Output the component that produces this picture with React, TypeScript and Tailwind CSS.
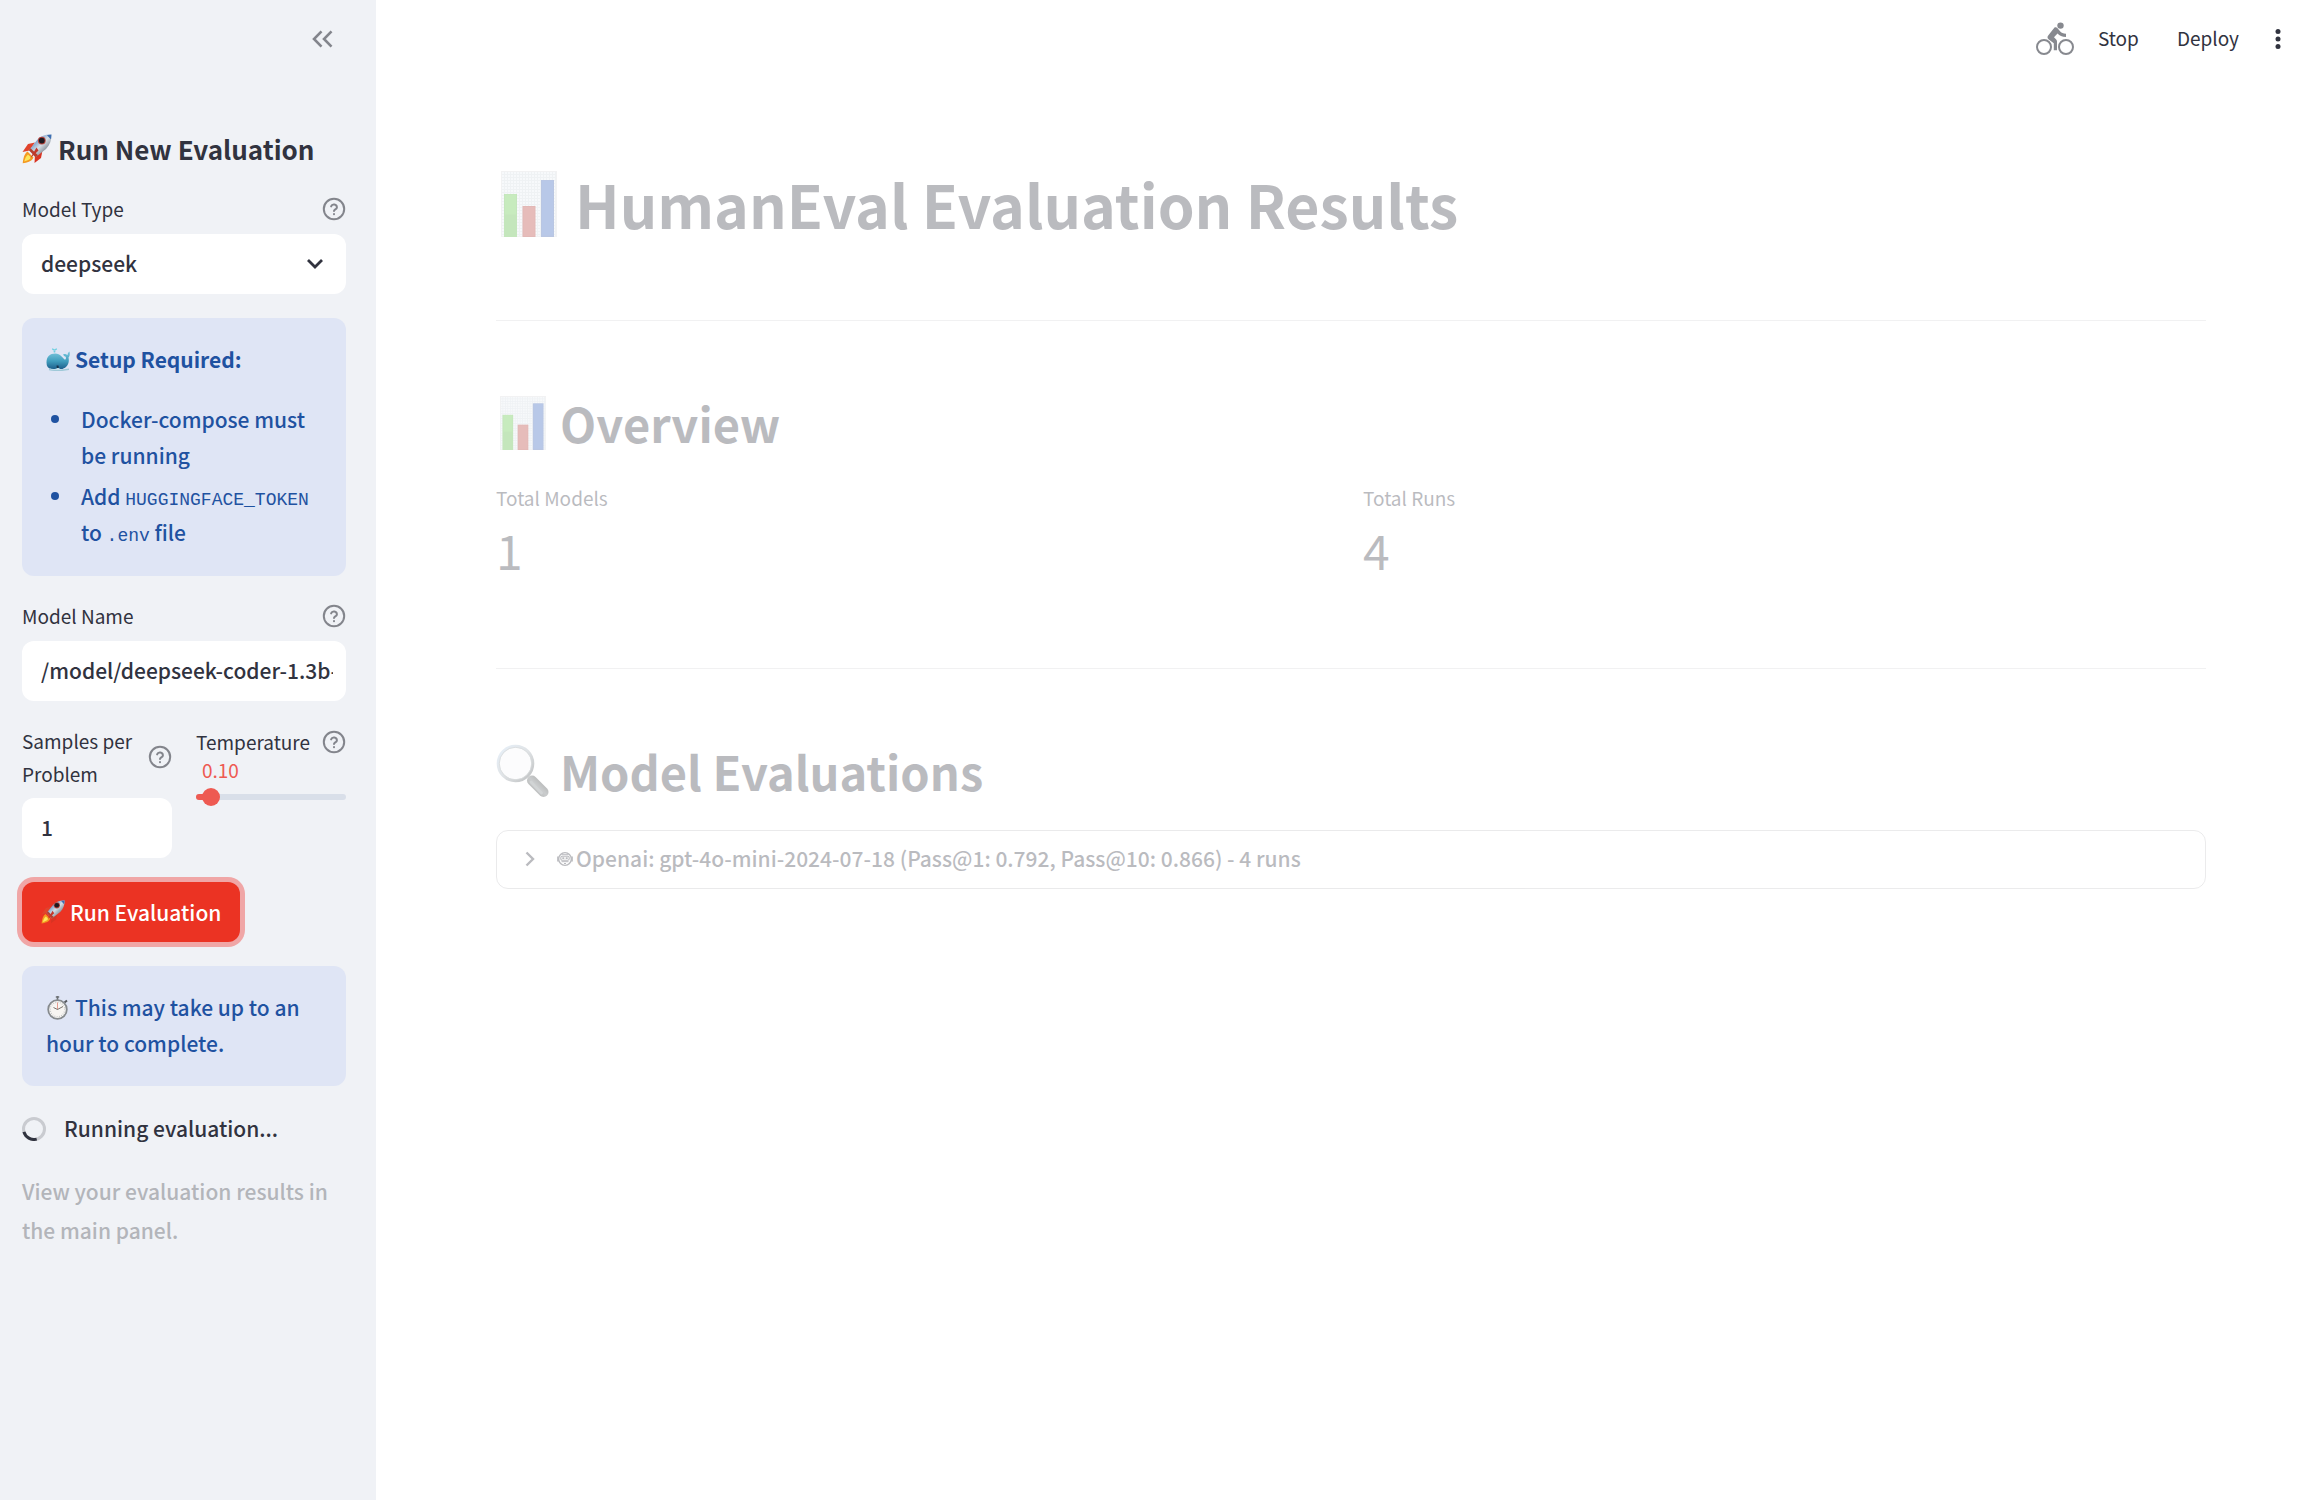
import React, { useId } from "react";

function HelpIcon() {
  return (
    <svg viewBox="0 0 24 24" className="h-6 w-6 shrink-0" fill="none" stroke="#83858c" strokeWidth="2" strokeLinecap="round" strokeLinejoin="round" aria-hidden="true">
      <circle cx="12" cy="12" r="10.2" />
      <path d="M9.1 9.400a3 3 0 0 1 5.800 1c0 1.800-2.900 2.200-2.900 3.600" />
      <path d="M12 17.100v.1" />
    </svg>
  );
}

function Rocket({ className }: { className: string }) {
  const id = useId();
  return (
    <svg viewBox="0 0 30 30" className={className} aria-hidden="true">
      <defs>
        <linearGradient id={id} x1="0" y1="0" x2="1" y2="1">
          <stop offset="0.15" stopColor="#3d78bd" />
          <stop offset="0.5" stopColor="#d5dde4" />
          <stop offset="0.85" stopColor="#5c6570" />
        </linearGradient>
      </defs>
      <path d="M13 8.500 6 10 .5 18l7-1.500z" fill="#e0432c" />
      <path d="M20.500 16.500 19 24l-6.500 5 .5-8z" fill="#d83423" />
      <path d="M5.500 17.500C2 20 1.500 24 .7 29.300 5 28.500 9.500 28 11.500 23.500z" fill="#f49a22" />
      <path d="M6 20.500c-2.200 1.800-2.900 4-3.800 7 3-.8 5.600-1.700 7-4z" fill="#fde75c" />
      <path d="M29.500.6c-5.600-.3-10.200 1-14 5L7 16.200l6.500 7L24 15c4-4 5.600-8.800 5.500-14.400z" fill={`url(#${id})`} />
      <path d="M7 16.200l1.500-2 7.500 7-2.500 2z" fill="#b5402f" />
      <path d="M29.500.6 25 1c1.200 1.800 2.400 3 4 4.200z" fill="#3d6fb3" />
      <circle cx="19.800" cy="6.600" r="3.900" fill="#b9443c" />
      <circle cx="19.800" cy="6.600" r="2.900" fill="#1d1a20" />
      <path d="M14.500 13.500 8 24.500l8.500-8z" fill="#c2372a" />
    </svg>
  );
}

function Whale() {
  const id = useId();
  return (
    <svg viewBox="0 0 24 24" className="h-6 w-6 shrink-0" aria-hidden="true">
      <defs>
        <linearGradient id={id} x1="0" y1="0" x2="0" y2="1">
          <stop offset="0" stopColor="#7cc8de" />
          <stop offset="0.55" stopColor="#3f9dbd" />
          <stop offset="1" stopColor="#1d5f8c" />
        </linearGradient>
      </defs>
      <path d="M8.500 5.500c0-2-.8-3.300-3-3.800M8.500 5.500c0-2 .8-3.300 3-3.800M8.500 5.500V2" stroke="#6fcfe0" strokeWidth="1.500" fill="none" strokeDasharray="2 .7" />
      <path d="M3 22.500c6 1.200 14 1 20-.2" stroke="#9fc9d8" strokeWidth="1.500" fill="none" />
      <path d="M.5 15.500C.5 9.500 4 6.500 9.200 6.500c5.300 0 7.300 4.500 9.800 6.300 1.300-1.200 1.200-2.600.3-3.200-1.400-.8-2.200-1.500-1.900-2.600 1.800-.2 3.200.3 4.100 1.200.2-1.700.6-3 2-3.700.6 2.500.2 4.700-1 6.100 1.300 5.500-1.300 10-6 11.400H5C2.200 21.500.5 19.500.5 15.500z" fill={`url(#${id})`} />
      <path d="M3 21c3 1.500 6.500 1.500 9-.5l3 2H5z" fill="#bfe0ea" />
      <path d="M10.500 18.500h2l.3 2.500h-2z" fill="#163049" />
    </svg>
  );
}

function Stopwatch() {
  return (
    <svg viewBox="0 0 24 24" className="mr-[5px] inline-block h-6 w-6 align-[-4px]" aria-hidden="true">
      <path d="M11.500 0v4M9.800 1h3.400" stroke="#6e7276" strokeWidth="1.600" />
      <path d="m18.500 6.500 2.500-2" stroke="#55595e" strokeWidth="2" />
      <circle cx="11.500" cy="13.500" r="9.300" fill="#f7f5f2" stroke="#868a8d" strokeWidth="1.800" />
      <circle cx="11.500" cy="13.500" r="7.200" fill="none" stroke="#b6b9ba" strokeWidth="1.200" strokeDasharray=".7 1.560" />
      <path d="M11.500 13.500V6.500" stroke="#e59c8f" strokeWidth="1" />
      <path d="m7.500 11.500 4 2 5.500-3" stroke="#77726c" strokeWidth="1" fill="none" />
    </svg>
  );
}

function BarChart({ className }: { className: string }) {
  const id = useId();
  return (
    <svg viewBox="0 0 56 66" className={className} preserveAspectRatio="none" aria-hidden="true">
      <defs>
        <pattern id={id} width="3" height="3" patternUnits="userSpaceOnUse">
          <rect width="3" height="3" fill="#e9eef3" />
          <path d="M0 .5h3M.5 0v3" stroke="#cfd8e0" strokeWidth="1" />
        </pattern>
      </defs>
      <rect width="56" height="66" rx="1" fill={`url(#${id})`} />
      <rect x=".5" y=".5" width="55" height="65" fill="none" stroke="#d9dadc" />
      <rect x="3" y="23" width="13" height="43" fill="#50b536" />
      <rect x="4" y="23.500" width="11" height="20" fill="#59c43d" />
      <rect x="21.500" y="35" width="13" height="31" fill="#aa2c26" />
      <rect x="22.500" y="36" width="11" height="29" fill="#b53630" />
      <rect x="40" y="9" width="13" height="57" fill="#2f56aa" />
      <rect x="41" y="9.500" width="11" height="55" fill="#2c5bbb" />
    </svg>
  );
}

function Magnifier() {
  const id = useId();
  return (
    <svg viewBox="0 0 54 54" className="h-[54px] w-[54px] shrink-0" aria-hidden="true">
      <defs>
        <linearGradient id={id} x1="1" y1="0" x2="0" y2="1">
          <stop offset="0" stopColor="#1d2020" />
          <stop offset="0.5" stopColor="#60676a" />
          <stop offset="1" stopColor="#2a2e2e" />
        </linearGradient>
        <linearGradient id={id + "r"} x1="0" y1="0" x2="1" y2="1">
          <stop offset="0" stopColor="#b8d3ee" />
          <stop offset="0.5" stopColor="#a3adb5" />
          <stop offset="1" stopColor="#3c4144" />
        </linearGradient>
      </defs>
      <circle cx="19.500" cy="19.500" r="17.300" fill="#f7f8f9" stroke={`url(#${id}r)`} strokeWidth="3" />
      <circle cx="19.500" cy="19.500" r="16.200" fill="none" stroke="#8c9498" strokeWidth=".8" />
      <path d="m36 36.500 11.500 11.500" stroke={`url(#${id})`} strokeWidth="10" strokeLinecap="round" />
      <path d="m35 38 10.500 11" stroke="#777e81" strokeWidth="3" strokeLinecap="round" />
    </svg>
  );
}

function RobotFace() {
  return (
    <svg viewBox="0 0 16 16" className="h-4 w-4 shrink-0" fill="none" stroke="#31333f" aria-hidden="true">
      <circle cx="8" cy="8" r="6.300" strokeWidth="1.300" />
      <path d="M1 5.500v5M15 5.500v5" strokeWidth="1.700" />
      <rect x="3.800" y="5.200" width="8.400" height="4" rx="1.500" strokeWidth="1.100" />
      <path d="M5.300 7.200h2M8.700 7.200h2" strokeWidth="1.700" />
      <path d="M4.500 3.700h7M4.500 10.700h7M7 12.500h2" strokeWidth="1" />
    </svg>
  );
}

function Cyclist() {
  return (
    <svg viewBox="0 0 38 34" className="h-[34px] w-[38px] shrink-0" fill="none" stroke="#87898f" aria-hidden="true">
      <circle cx="8" cy="25" r="7" strokeWidth="2" />
      <circle cx="30" cy="25" r="7" strokeWidth="2" />
      <circle cx="24.500" cy="3.600" r="3.200" fill="#87898f" stroke="none" />
      <path d="M18.500 5.500c1-.5 2-.3 2.800.5l3.200 3.800c1 1 2.500 1.800 5.500 1.900v3.200c-4 0-6.500-1.300-8.500-3.400l-3.500 3.700 2.200 2.300c.6.600.8 1.200.8 2v8.800h-3.200v-7l-5-3.800c-1.600-1.200-1.700-2.800-.4-4.200z" fill="#87898f" stroke="none" />
    </svg>
  );
}

const field =
  "h-[60px] w-full rounded-xl bg-white pb-[2px] pl-[19px] pr-[13px] text-[21px] leading-[36px] font-medium text-[#31333f] outline-none";

function FieldLabel({ htmlFor, children, className = "" }: { htmlFor: string; children: React.ReactNode; className?: string }) {
  return (
    <div className={`flex items-center justify-between ${className}`}>
      <label htmlFor={htmlFor} className="whitespace-nowrap text-[19px] leading-[33px]">
        {children}
      </label>
      <button type="button" aria-label="Help" className="-ml-1">
        <HelpIcon />
      </button>
    </div>
  );
}

function Sidebar() {
  return (
    <aside className="w-[376px] shrink-0 bg-[#f0f2f6] pl-[22px] pr-[30px]">
      <div className="flex h-[78px] items-center justify-end">
        <button type="button" aria-label="Collapse sidebar" className="mr-[13px]">
          <svg viewBox="0 0 22 18" className="h-[18px] w-[22px]" fill="none" stroke="#83858c" strokeWidth="2.600" aria-hidden="true">
            <path d="M10.500 1.300 3 9l7.500 7.700M20.500 1.300 13 9l7.500 7.700" />
          </svg>
        </button>
      </div>

      <div className="pt-[47px]">
        <h2 className="mb-5 flex h-12 items-center gap-[6px] whitespace-nowrap text-[26px] font-semibold leading-[48px]">
          <Rocket className="h-[30px] w-[30px] shrink-0" />
          Run New Evaluation
        </h2>

        <div className="flex flex-col gap-6">
          <div>
            <FieldLabel htmlFor="model-type" className="-mt-px mb-[9px]">Model Type</FieldLabel>
            <div className="relative">
              <select id="model-type" defaultValue="deepseek" className={`${field} appearance-none`}>
                <option>deepseek</option>
                <option>openai</option>
              </select>
              <svg viewBox="0 0 18 12" className="pointer-events-none absolute right-[22px] top-[24px] h-3 w-[18px]" fill="none" stroke="#31333f" strokeWidth="2.800" aria-hidden="true">
                <path d="m2 2 7 7 7-7" />
              </svg>
            </div>
          </div>

          <section className="rounded-xl bg-[#dfe5f5] px-6 pt-[23px] pb-[26px] text-[21px] leading-[36px] font-medium text-[#1f52a1]">
            <p className="mb-6 flex items-center gap-[5px] font-semibold">
              <Whale />
              Setup Required:
            </p>
            <ul className="flex flex-col gap-[5px]">
              <li className="flex gap-[22px]">
                <span className="ml-[5px] mt-[14px] h-2 w-2 shrink-0 rounded-full bg-[#1f52a1]" />
                <span className="whitespace-nowrap">
                  Docker-compose must
                  <br />
                  be running
                </span>
              </li>
              <li className="flex gap-[22px]">
                <span className="ml-[5px] mt-[14px] h-2 w-2 shrink-0 rounded-full bg-[#1f52a1]" />
                <span className="whitespace-nowrap">
                  Add <code className="font-['Liberation_Mono',monospace] text-[18px] leading-[20px] font-normal">HUGGINGFACE_TOKEN</code>
                  <br />
                  to <code className="font-['Liberation_Mono',monospace] text-[18px] leading-[20px] font-normal">.env</code> file
                </span>
              </li>
            </ul>
          </section>

          <div>
            <FieldLabel htmlFor="model-name" className="-mt-px mb-[9px]">Model Name</FieldLabel>
            <input id="model-name" type="text" defaultValue="/model/deepseek-coder-1.3b-instruct" className={field} />
          </div>

          <div className="grid grid-cols-2 gap-6">
            <div>
              <FieldLabel htmlFor="samples" className="-mt-px mb-2">
                Samples per
                <br />
                Problem
              </FieldLabel>
              <input id="samples" type="text" inputMode="numeric" defaultValue="1" className={field} />
            </div>
            <div>
              <FieldLabel htmlFor="temperature">Temperature</FieldLabel>
              <output htmlFor="temperature" className="ml-[6px] block text-[19px] leading-6 text-[#ee5a52]">0.10</output>
              <div className="relative mt-[6px] flex h-[18px] items-center">
                <div className="h-[6px] w-full overflow-hidden rounded-full bg-[#d9dfe9]">
                  <div className="h-full w-[10%] bg-[#ee5a52]" />
                </div>
                <input
                  id="temperature"
                  type="range"
                  min="0"
                  max="1"
                  step="0.1"
                  defaultValue="0.1"
                  className="absolute -left-[9px] top-0 h-[18px] w-[168px] appearance-none bg-transparent [&::-webkit-slider-thumb]:h-[18px] [&::-webkit-slider-thumb]:w-[18px] [&::-webkit-slider-thumb]:appearance-none [&::-webkit-slider-thumb]:rounded-full [&::-webkit-slider-thumb]:bg-[#ee5a52]"
                />
              </div>
            </div>
          </div>

          <button type="button" className="flex h-[60px] items-center gap-[5px] self-start rounded-xl bg-[#eb3323] px-[19px] pb-px text-[21px] leading-[36px] font-medium text-white ring-5 ring-[#f0a6a6]">
            <Rocket className="h-6 w-6 shrink-0" />
            Run Evaluation
          </button>

          <section className="rounded-xl bg-[#dfe5f5] px-6 pt-[23px] pb-[25px] text-[21px] leading-[36px] font-medium text-[#1f52a1]">
            <Stopwatch />
            This may take up to an hour to complete.
          </section>

          <div role="status" className="flex h-[38px] items-center gap-[18px] text-[21px] font-medium">
            <svg viewBox="0 0 24 24" className="h-6 w-6" fill="none" strokeWidth="3" aria-hidden="true">
              <circle cx="12" cy="12" r="10.500" stroke="#c9cbd0" />
              <path d="M1.900 14.900A10.500 10.500 0 0 0 14.700 22.150" stroke="#31333f" />
            </svg>
            Running evaluation...
          </div>

          <p className="text-[21px] leading-[39px] font-medium text-[#b3b5ba]">View your evaluation results in the main panel.</p>
        </div>
      </div>
    </aside>
  );
}

function Metric({ label, value }: { label: string; value: string }) {
  return (
    <div>
      <dt className="text-[19px] leading-[32px]">{label}</dt>
      <dd className="text-[48px] leading-[70px]">{value}</dd>
    </div>
  );
}

export default function App() {
  return (
    <div className="flex min-h-screen bg-white font-['Noto_Sans_CJK_SC',sans-serif] text-[#31333f]">
      <Sidebar />
      <div className="min-w-0 flex-1">
        <header className="flex h-[78px] items-center justify-end pr-[43px] text-[19px] leading-[30px]">
          <Cyclist />
          <button type="button" className="mb-[2px] ml-6">Stop</button>
          <button type="button" className="mb-[2px] ml-[38px]">Deploy</button>
          <button type="button" aria-label="Menu" className="ml-[36px]">
            <svg viewBox="0 0 6 22" className="h-[22px] w-[6px]" fill="#31333f" aria-hidden="true">
              <circle cx="3" cy="3.500" r="2.500" />
              <circle cx="3" cy="11" r="2.500" />
              <circle cx="3" cy="18.500" r="2.500" />
            </svg>
          </button>
        </header>

        <main className="pl-[120px] pr-[118px] opacity-33">
          <h1 className="mt-[81px] flex h-[90px] items-center gap-[18px] pl-[5px] text-[59px] font-bold leading-[90px]">
            <BarChart className="h-[66px] w-[56px] shrink-0" />
            HumanEval Evaluation Results
          </h1>
          <hr className="mt-[71px] border-[#31333f]/20" />

          <h2 className="mt-[62px] flex h-20 items-center gap-[14px] pl-1 text-[47px] font-semibold leading-[80px]">
            <BarChart className="h-[54px] w-[46px] shrink-0" />
            Overview
          </h2>
          <dl className="mt-[19px] grid grid-cols-2 gap-6">
            <Metric label="Total Models" value="1" />
            <Metric label="Total Runs" value="4" />
          </dl>
          <hr className="mt-[84px] border-[#31333f]/20" />

          <h2 className="mt-[62px] flex h-20 items-center gap-[10px] text-[47px] font-semibold leading-[80px]">
            <Magnifier />
            Model Evaluations
          </h2>
          <button type="button" aria-expanded="false" className="mt-[19px] flex h-[59px] w-full items-center rounded-xl border border-[#31333f]/30 pb-px pl-[27px] text-left text-[21px] font-medium">
            <svg viewBox="0 0 12 16" className="mr-[21px] h-4 w-3" fill="none" stroke="#31333f" strokeWidth="2.400" aria-hidden="true">
              <path d="m2.500 1.500 6.500 6.500-6.500 6.500" />
            </svg>
            <RobotFace />
            <span className="ml-[3px]">Openai: gpt-4o-mini-2024-07-18 (Pass@1: 0.792, Pass@10: 0.866) - 4 runs</span>
          </button>
        </main>
      </div>
    </div>
  );
}
